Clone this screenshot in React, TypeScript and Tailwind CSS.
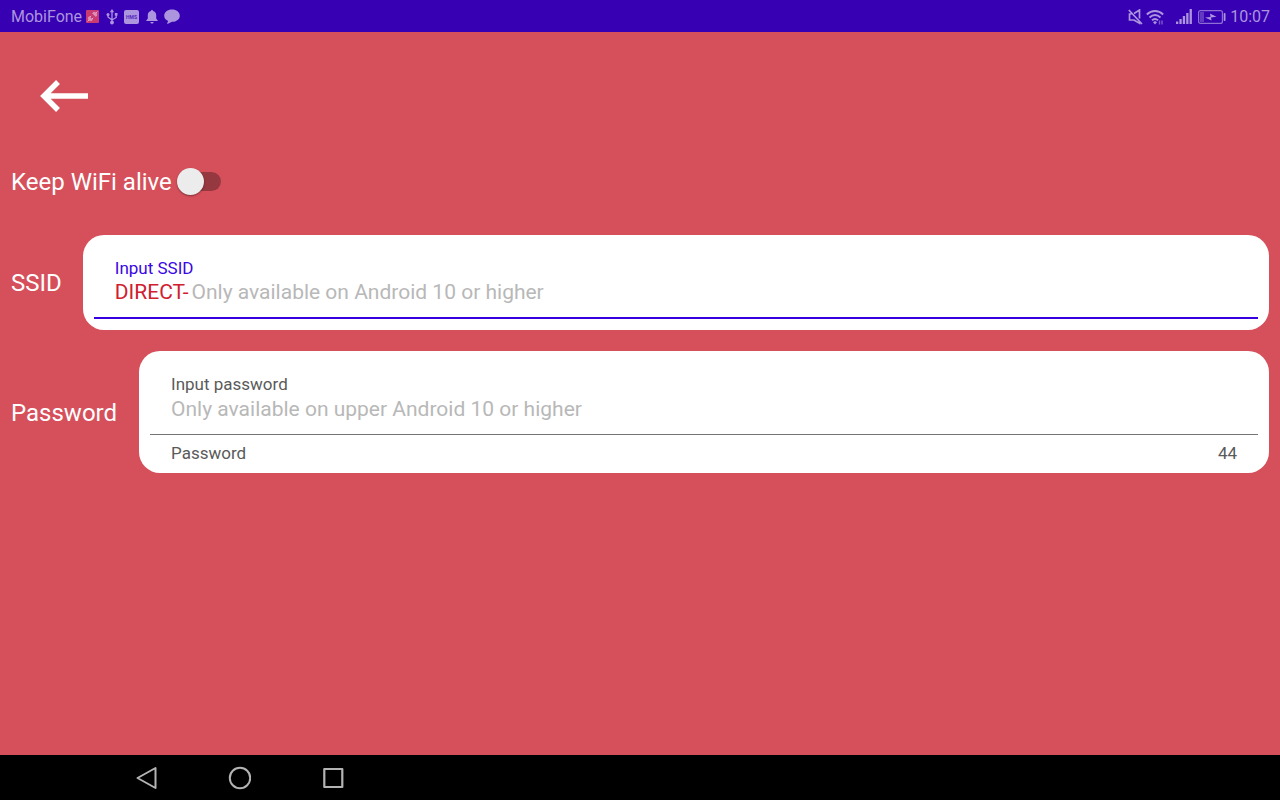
import { useState } from "react";

function StatusBar() {
  return (
    <header className="flex h-8 shrink-0 items-center justify-between bg-[#3700b3] pt-px pr-[10px] pl-[11px] text-[#ac94de]">
      <div className="flex items-center">
        <span className="text-base">MobiFone</span>
        <svg className="ml-1 size-[13px]" viewBox="0 0 13 13" aria-hidden="true">
          <rect width="13" height="13" rx="1" fill="#c93a71" />
          <g fill="#e2b3d5" stroke="#e2b3d5" strokeWidth="0.900">
            <path d="M1.500 11.500 3 10M10 3l1.500-1.500M4 7l1.200-1.200M6 9l1.200-1.200" />
            <path d="M3.200 6.500 6.500 9.800C5.500 11 4 11 3 10s-1-2.400.2-3.500z" fillOpacity="0.700" strokeWidth="0.500" />
            <path d="M6.500 3.200 9.800 6.500C11 5.500 11 4 10 3s-2.400-1-3.500.2z" fillOpacity="0.700" strokeWidth="0.500" />
          </g>
        </svg>
        <svg className="ml-[7px] h-4 w-3" viewBox="0 0 12 16" fill="currentColor" aria-hidden="true">
          <path d="M6 0 8.200 3.200H3.800z" />
          <circle cx="6" cy="13.500" r="1.900" />
          <circle cx="2" cy="5.500" r="1.500" />
          <rect x="8.800" y="4" width="2.700" height="2.700" />
          <path d="M6 2v11M2 5.500V8l4 3M10.200 6v2.500L6 11" fill="none" stroke="currentColor" strokeWidth="1.300" />
        </svg>
        <svg className="ml-[6px] h-[14px] w-[15px]" viewBox="0 0 15 14" aria-hidden="true">
          <rect width="15" height="14" rx="2" fill="currentColor" />
          <text x="7.500" y="9" textAnchor="middle" fontSize="5" fontWeight="700" fill="#5527bd">
            HMS
          </text>
        </svg>
        <svg className="ml-[7px] h-[14px] w-3" viewBox="0 0 12 14" fill="currentColor" aria-hidden="true">
          <path d="M6 0c.7 0 1 .4 1 1 2 .5 3.200 2 3.200 4v3.500L12 11H0l1.800-2.500V5C1.800 3 3 1.500 5 1c0-.6.300-1 1-1zM4.300 12h3.400c-.3 1-.9 1.500-1.700 1.500S4.600 13 4.300 12z" />
        </svg>
        <svg className="ml-[6px] h-[15px] w-4" viewBox="0 0 16 15" fill="currentColor" aria-hidden="true">
          <path d="M8 .5c4.500 0 7.800 2.700 7.800 6.200S12.500 12.800 8 12.800L4 14.800c-.8.300-1-.1-.7-.7l.8-2.100C1.800 11 .2 9 .2 6.700.2 3.200 3.500.5 8 .5z" />
        </svg>
      </div>
      <div className="flex items-center">
        <svg className="h-4 w-[15px]" viewBox="0 0 15 16" fill="none" stroke="currentColor" strokeWidth="1.700" aria-hidden="true">
          <path d="M6 4.500 11.500 1v8.500M11.500 12.500v1.800L6 11H1.500V5h2M.8 1l13.200 14" />
        </svg>
        <svg className="ml-[3px] h-4 w-[18px]" viewBox="0 0 18 16" fill="none" stroke="currentColor" aria-hidden="true">
          <path d="M.8 5.500c5-4.600 11.400-4.600 16.400 0M3.500 8.500c3.500-3.200 7.500-3.200 11 0M6 11.300c2-1.800 4-1.800 6 0" strokeWidth="1.900" />
          <path d="M7 13.300 9 12l2 1.300L9 15.500z" fill="currentColor" stroke="none" />
          <path d="M13.500 11.500v4M16 11.500v4" strokeWidth="1.400" strokeOpacity="0.600" />
        </svg>
        <svg className="ml-3 h-[15px] w-4" viewBox="0 0 16 15" fill="currentColor" aria-hidden="true">
          <path d="M0 12.500h2.300V15H0zM3.400 10h2.300v5H3.400zM6.800 7h2.300v8H6.800zM10.200 4h2.300v11h-2.300zM13.600 0h2.300v15h-2.300z" />
        </svg>
        <svg className="ml-[6px] h-[14px] w-7" viewBox="0 0 28 14" aria-hidden="true">
          <rect x=".6" y=".6" width="23.800" height="12.800" rx="2" fill="none" stroke="currentColor" strokeOpacity="0.750" strokeWidth="1.200" />
          <rect x="2" y="2" width="4" height="10" fill="#623ac2" />
          <path d="m7 7.600 5.500-.6L12 3.500l6.500 3.300-5.500.8.500 3z" fill="currentColor" />
          <rect x="25.700" y="3" width="1.800" height="8" rx=".8" fill="currentColor" />
        </svg>
        <span className="ml-1 text-base">10:07</span>
      </div>
    </header>
  );
}

function NavBar() {
  return (
    <nav className="flex h-[45px] shrink-0 items-center gap-[69px] bg-black pl-[134px] text-[#b3b3b3]">
      <button type="button" aria-label="Back">
        <svg className="size-6" viewBox="0 0 24 24" fill="none" stroke="currentColor" strokeWidth="2" strokeLinejoin="round">
          <path d="M21.500 2v20L3.500 12z" />
        </svg>
      </button>
      <button type="button" aria-label="Home">
        <svg className="size-6" viewBox="0 0 24 24" fill="none" stroke="currentColor" strokeWidth="2">
          <circle cx="13" cy="12" r="10.200" />
        </svg>
      </button>
      <button type="button" aria-label="Recent apps">
        <svg className="size-6" viewBox="0 0 24 24" fill="none" stroke="currentColor" strokeWidth="2.200" strokeLinejoin="round">
          <rect x="4.300" y="3" width="18" height="18" />
        </svg>
      </button>
    </nav>
  );
}

export default function App() {
  const [keepAlive, setKeepAlive] = useState(false);
  const [ssid, setSsid] = useState("");
  const [password, setPassword] = useState("");

  return (
    <div className="flex min-h-screen flex-col bg-[#d6505b] font-['Roboto',sans-serif]">
      <StatusBar />
      <main className="flex flex-1 flex-col px-[11px] text-white">
        <button type="button" aria-label="Go back" className="mt-10 ml-[29px] w-12 self-start">
          <svg className="h-12 w-12" viewBox="0 0 48 48" fill="none" stroke="currentColor" strokeWidth="5.500">
            <path d="M48 24H4M18 10 4 24l14 14" />
          </svg>
        </button>

        <label className="mt-[45px] flex h-8 items-center gap-[5px] self-start text-2xl">
          <span className="pt-px">Keep WiFi alive</span>
          <input
            type="checkbox"
            role="switch"
            checked={keepAlive}
            onChange={(e) => setKeepAlive(e.target.checked)}
            className="peer sr-only"
          />
          <span className="flex h-[19px] w-11 items-center rounded-full bg-linear-to-r from-transparent from-20% to-[#963840] to-20% peer-checked:justify-end">
            <span className="size-[27px] shrink-0 rounded-full bg-[#ececec] shadow-[0_1px_2px_rgba(0,0,0,0.4)]" />
          </span>
        </label>

        <div className="mt-[38px] flex items-center gap-[21px]">
          <span className="shrink-0 pt-px text-2xl">SSID</span>
          <div className="flex-1 rounded-[21px] bg-white px-[11px] pt-[23px] pb-[11px]">
            <div className="border-b-2 border-[#3700e0] px-[21px] pb-[11px]">
              <label htmlFor="ssid" className="block text-[17px] leading-5 text-[#3a06e4]">
                Input SSID
              </label>
              <div className="flex h-7 items-center gap-[3px] pt-px text-[21px]">
                <span className="text-[#d0202e]">DIRECT-</span>
                <input
                  id="ssid"
                  type="text"
                  value={ssid}
                  onChange={(e) => setSsid(e.target.value)}
                  placeholder="Only available on Android 10 or higher"
                  className="min-w-0 flex-1 text-black outline-none placeholder:text-[#b8b8b8]"
                />
              </div>
            </div>
          </div>
        </div>

        <div className="mt-[21px] flex items-center gap-[22px]">
          <span className="shrink-0 pt-px text-2xl">Password</span>
          <div className="flex-1 rounded-[21px] bg-white px-[11px] pt-[23px] pb-[10px] text-[17px] leading-5 text-[#5a5a5a]">
            <div className="border-b border-[#757575] px-[21px] pb-3">
              <label htmlFor="password" className="block">
                Input password
              </label>
              <input
                id="password"
                type="text"
                value={password}
                onChange={(e) => setPassword(e.target.value)}
                placeholder="Only available on upper Android 10 or higher"
                className="block h-7 w-full pt-px text-[21px] text-black outline-none placeholder:text-[#b8b8b8]"
              />
            </div>
            <div className="flex justify-between px-[21px] pt-2">
              <span>Password</span>
              <span>44</span>
            </div>
          </div>
        </div>
      </main>
      <NavBar />
    </div>
  );
}
